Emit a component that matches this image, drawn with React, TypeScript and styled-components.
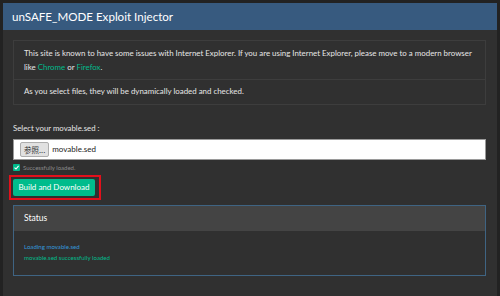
import React from "react";
import styled, { createGlobalStyle } from "styled-components";

const GlobalStyle = createGlobalStyle`
  html, body {
    margin: 0;
    padding: 0;
    background: #222222;
    font-family: Lato, "Noto Sans CJK JP", sans-serif;
    color: #ffffff;
  }
`;

const Page = styled.div`
  width: 500px;
  height: 296px;
  padding: 3px 3px 0 3px;
  box-sizing: border-box;
  overflow: hidden;
`;

const Card = styled.div`
  background: #303030;
  height: 100%;
  display: flex;
  flex-direction: column;
`;

const Header = styled.div`
  background: #375a7f;
  height: 27px;
  display: flex;
  align-items: center;
  padding-left: 9px;
  font-size: 11.6px;
`;

const Body = styled.div`
  padding: 10px 11px 0 10px;
  display: flex;
  flex-direction: column;
`;

const Notice = styled.div`
  border: 1px solid #3d3d3d;
  font-size: 7.9px;
  color: #e6e6e6;
`;

const NoticeRow = styled.div<{ $pad: string }>`
  padding: ${(p) => p.$pad};
  line-height: 13.5px;
  & + & {
    border-top: 1px solid #3d3d3d;
  }
`;

const Link = styled.span`
  color: #00bc8c;
`;

const Label = styled.div`
  margin-top: 18px;
  font-size: 7.8px;
  color: #e6e6e6;
`;

const FileInput = styled.div`
  margin-top: 6px;
  height: 21px;
  background: #ffffff;
  border: 1px solid #9a9a9a;
  box-sizing: border-box;
  display: flex;
  align-items: center;
  padding-left: 6px;
  gap: 3px;
  font-size: 8px;
  color: #222;
`;

const Browse = styled.span`
  height: 13px;
  display: flex;
  align-items: center;
  padding: 0 3px;
  background: #e1e1e1;
  border: 1px solid #adadad;
  border-radius: 2px;
  font-size: 7.5px;
  color: #333;
  font-family: "Noto Sans CJK JP", Lato, sans-serif;
`;

const Hint = styled.div`
  margin-top: 4px;
  display: flex;
  align-items: center;
  gap: 3px;
  font-size: 6px;
  color: #8a8a8a;
`;

const Highlight = styled.div`
  margin: 4px 0 0 -4px;
  align-self: flex-start;
  border: 2px solid #e3101b;
  padding: 2px 4px 2px 2px;
`;

const Button = styled.button`
  display: block;
  background: #00bc8c;
  border: none;
  border-radius: 2px;
  color: #fff;
  font-family: Lato, sans-serif;
  font-size: 8px;
  height: 17px;
  width: 82px;
  padding: 0;
  cursor: pointer;
`;

const StatusCard = styled.div`
  margin-top: 5px;
  border: 1px solid #3f6483;
  height: 71px;
  box-sizing: border-box;
`;

const StatusHead = styled.div`
  background: #444444;
  height: 25px;
  display: flex;
  align-items: center;
  padding-left: 10px;
  font-size: 8.5px;
`;

const StatusBody = styled.div`
  padding: 12px 10px 0 10px;
  display: flex;
  flex-direction: column;
  gap: 3px;
`;

const LogLine = styled.div<{ $color: string }>`
  color: ${(p) => p.$color};
  font-size: 6.1px;
  line-height: 8px;
`;

const CheckIcon = () => (
  <svg width="7" height="7" viewBox="0 0 7 7">
    <rect width="7" height="7" rx="1" fill="#00bc8c" />
    <path d="M1.5 3.6 L3 5 L5.6 1.9" stroke="#fff" strokeWidth="1.1" fill="none" />
  </svg>
);

export default function App() {
  return (
    <>
      <GlobalStyle />
      <Page>
        <Card>
          <Header>unSAFE_MODE Exploit Injector</Header>
          <Body>
            <Notice>
              <NoticeRow $pad="6px 10px 5px 10px">
                This site is known to have some issues with Internet Explorer. If you are using Internet
                Explorer, please move to a modern browser like <Link>Chrome</Link> or <Link>Firefox</Link>.
              </NoticeRow>
              <NoticeRow $pad="5px 10px 5px 10px">
                As you select files, they will be dynamically loaded and checked.
              </NoticeRow>
            </Notice>
            <Label>Select your movable.sed :</Label>
            <FileInput>
              <Browse>参照...</Browse>
              movable.sed
            </FileInput>
            <Hint>
              <CheckIcon />
              Successfully loaded.
            </Hint>
            <Highlight>
              <Button>Build and Download</Button>
            </Highlight>
            <StatusCard>
              <StatusHead>Status</StatusHead>
              <StatusBody>
                <LogLine $color="#3498db">Loading movable.sed</LogLine>
                <LogLine $color="#00bc8c">movable.sed successfully loaded</LogLine>
              </StatusBody>
            </StatusCard>
          </Body>
        </Card>
      </Page>
    </>
  );
}
